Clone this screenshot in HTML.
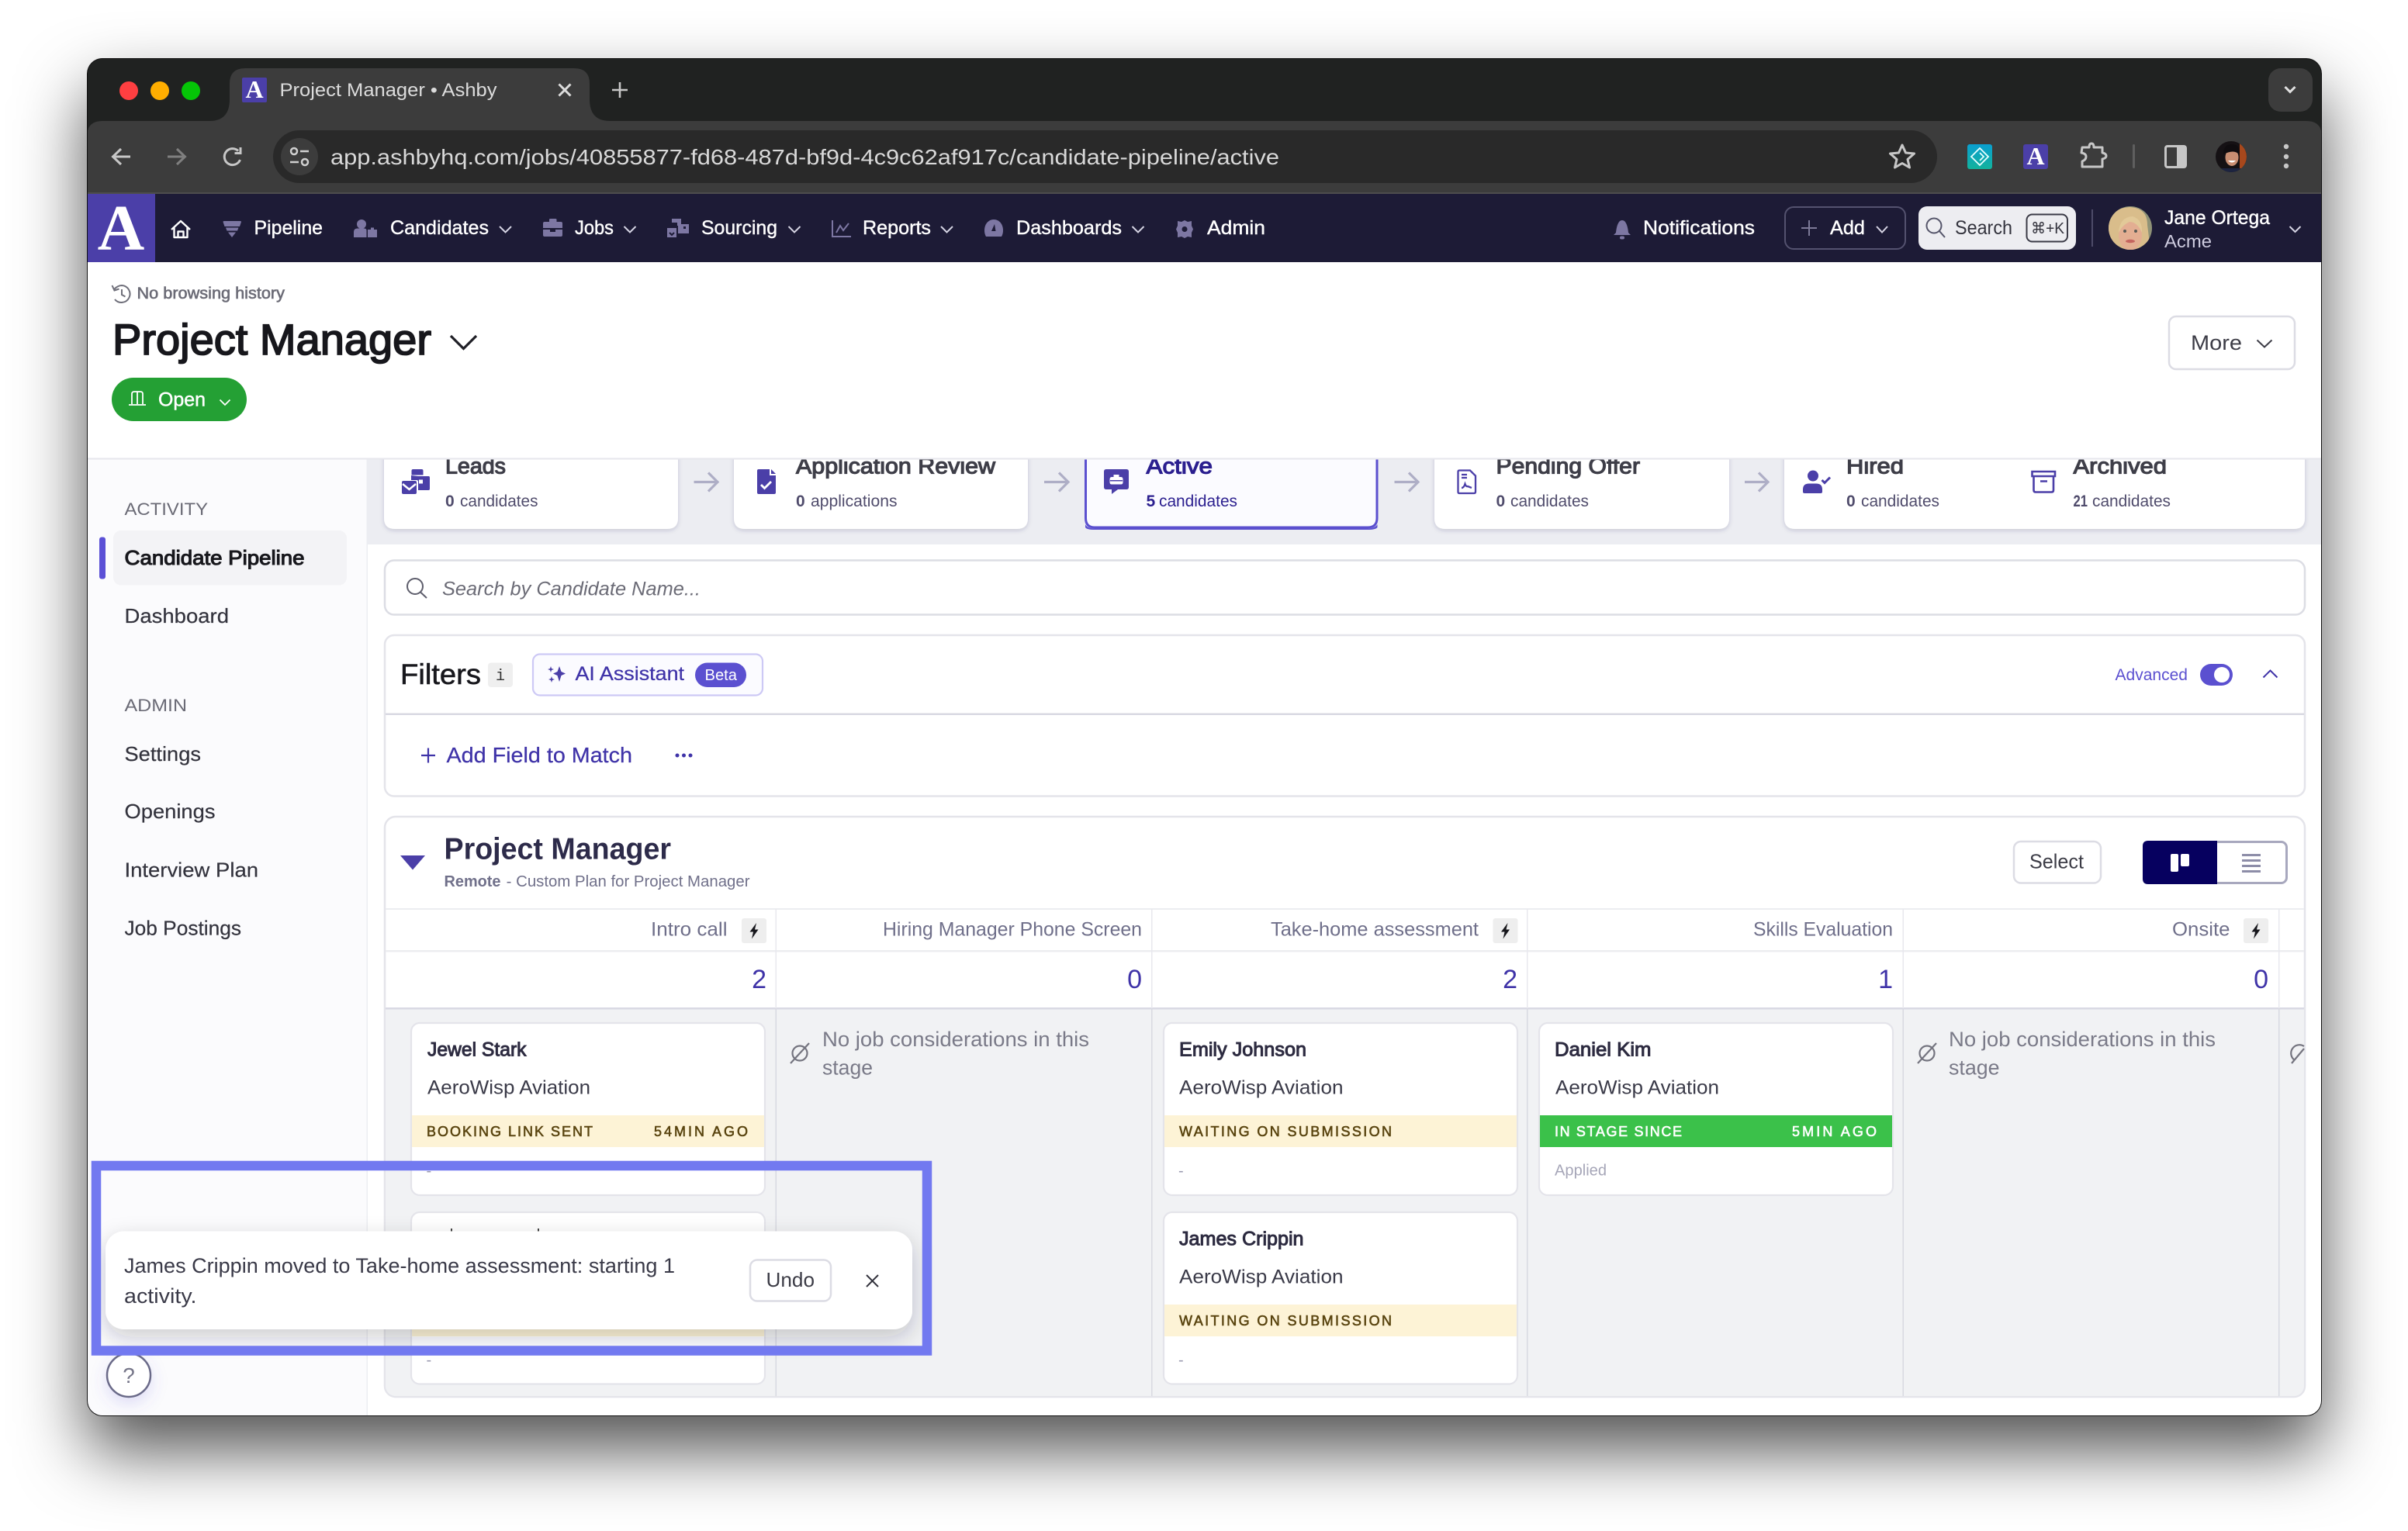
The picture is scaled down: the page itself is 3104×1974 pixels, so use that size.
<!DOCTYPE html>
<html lang="en"><head><meta charset="utf-8"><title>Project Manager • Ashby</title>
<style>
html,body{margin:0;padding:0;background:#fff;width:3104px;height:1974px;overflow:hidden}
#win{position:absolute;left:112px;top:75px;width:2881px;height:1751px;border-radius:20px;box-shadow:0 44px 88px rgba(0,0,0,.68)}
svg{position:absolute;left:0;top:0}
text{font-family:"Liberation Sans","DejaVu Sans",sans-serif;white-space:pre}
.s{font-family:"Liberation Serif",serif}
</style></head><body>
<div id="win"></div>
<svg width="3104" height="1974" viewBox="0 0 3104 1974" xmlns="http://www.w3.org/2000/svg">
<defs>
<clipPath id="w"><rect x="113" y="76" width="2879" height="1749" rx="19"/></clipPath>
<filter id="cs" x="-10%" y="-10%" width="120%" height="125%"><feDropShadow dx="0" dy="2" stdDeviation="3" flood-color="#2a2a50" flood-opacity=".18"/></filter>
<filter id="ts" x="-10%" y="-20%" width="120%" height="150%"><feDropShadow dx="0" dy="10" stdDeviation="14" flood-color="#1a1a30" flood-opacity=".22"/></filter>
<filter id="hs" x="-60%" y="-60%" width="220%" height="260%"><feDropShadow dx="0" dy="8" stdDeviation="10" flood-color="#5b50d6" flood-opacity=".18"/></filter>
<linearGradient id="ext" x1="0" y1="0" x2="0" y2="1"><stop offset="0" stop-color="#0a9fd0"/><stop offset="1" stop-color="#12b29c"/></linearGradient>
<clipPath id="av1"><circle cx="2746" cy="294" r="28"/></clipPath>
<clipPath id="av2"><circle cx="2876" cy="202" r="20"/></clipPath>
<clipPath id="grey"><rect x="497" y="1054" width="2473" height="746" rx="13"/></clipPath>
</defs>

<rect x="112" y="75" width="2881" height="1751" rx="20" fill="#111"/>
<g clip-path="url(#w)">
<!-- tab strip -->
<rect x="112" y="76" width="2881" height="90" fill="#202221"/>
<path d="M270 156 Q296 156 296 128 V108 Q296 88 316 88 H740 Q760 88 760 108 V128 Q760 156 786 156 Z" fill="#3c3c3c"/>
<circle cx="166" cy="117" r="12" fill="#fe3f41"/><circle cx="206" cy="117" r="12" fill="#ffae00"/><circle cx="246" cy="117" r="12" fill="#05c507"/>
<rect x="312" y="100" width="32" height="32" rx="2" fill="#4b3fa8"/>
<text class="s" x="328" y="126" font-size="32" font-weight="700" fill="#fff" text-anchor="middle">A</text>
<text x="360.500" y="124" font-size="24" fill="#dcdcdc" textLength="280" lengthAdjust="spacingAndGlyphs">Project Manager • Ashby</text>
<path d="M720.500 108.500 L735.500 123.500 M735.500 108.500 L720.500 123.500" stroke="#dcdcdc" stroke-width="3" fill="none"/>
<path d="M799 106 V126 M789 116 H809" stroke="#c8c8c8" stroke-width="2.600" fill="none"/>
<rect x="2924" y="88" width="57" height="56" rx="16" fill="#3c3c3c"/>
<path d="M2945.500 112 L2952 118.500 L2958.500 112" stroke="#e0e0e0" stroke-width="3" fill="none"/>
<!-- toolbar -->
<path d="M112 250 V176 Q112 156 132 156 H2973 Q2993 156 2993 176 V250 Z" fill="#3c3c3c"/>
<rect x="112" y="248" width="2881" height="2" fill="#4d4d4d"/>
<path d="M168 202 H146 M156 192 L145.500 202 L156 212" stroke="#c7c7c7" stroke-width="3" fill="none"/>
<path d="M216 202 H238 M228 192 L238.500 202 L228 212" stroke="#7f7f7f" stroke-width="3" fill="none"/>
<path d="M309.500 206 A10.500 10.500 0 1 1 307 194.500 M310 190 V197.500 H302.500" stroke="#c7c7c7" stroke-width="3" fill="none"/>
<rect x="352" y="168" width="2145" height="68" rx="34" fill="#292929"/>
<circle cx="386" cy="202" r="24" fill="#3c3c3c"/>
<circle cx="379" cy="195" r="4" stroke="#d0d0d0" stroke-width="2.500" fill="none"/><path d="M387 195 H398 M374 209 H385" stroke="#d0d0d0" stroke-width="2.500"/><circle cx="393" cy="209" r="4" stroke="#d0d0d0" stroke-width="2.500" fill="none"/>
<text x="426" y="212" font-size="28" fill="#d9d9d9" textLength="1223" lengthAdjust="spacingAndGlyphs">app.ashbyhq.com/jobs/40855877-fd68-487d-bf9d-4c9c62af917c/candidate-pipeline/active</text>
<path d="M2452 187 L2456.500 197 L2467.500 198 L2459 205.500 L2461.500 216 L2452 210.500 L2442.500 216 L2445 205.500 L2436.500 198 L2447.500 197 Z" fill="none" stroke="#c7c7c7" stroke-width="3" stroke-linejoin="round"/>
<rect x="2536" y="186" width="32" height="32" rx="3" fill="url(#ext)"/>
<path d="M2552 191 L2563 202 L2552 213 L2541 202 Z M2552 197 L2557 202 L2552 207" fill="none" stroke="#e8ffff" stroke-width="1.800"/>
<rect x="2608" y="186" width="32" height="32" rx="3" fill="#4b3fa8"/>
<text class="s" x="2624" y="212" font-size="32" font-weight="700" fill="#fff" text-anchor="middle">A</text>
<path d="M2684 190 H2693 Q2693 185 2696 185 Q2699 185 2699 190 H2710 V197 Q2715 198 2715 201 Q2715 204 2710 205 V215 H2684 V208 Q2689 206 2689 202 Q2689 198 2683 197 Z" fill="none" stroke="#c7c7c7" stroke-width="3" stroke-linejoin="round"/>
<rect x="2749" y="186" width="3" height="31" rx="1.500" fill="#5f5f5f"/>
<rect x="2791.500" y="188.500" width="26" height="27" rx="2.500" fill="none" stroke="#c7c7c7" stroke-width="3"/><rect x="2806" y="188" width="12" height="28" fill="#c7c7c7"/>
<g clip-path="url(#av2)"><rect x="2856" y="182" width="40" height="40" fill="#151114"/><rect x="2887" y="182" width="9" height="40" fill="#a8481c"/><ellipse cx="2877" cy="203" rx="8.500" ry="11" fill="#c98e72"/><path d="M2866 199 Q2866 186 2877 186 Q2888 186 2886 199 Q2880 192 2866 199 Z" fill="#0f0c0f"/><path d="M2872 207 Q2877 212 2882 207 Z" fill="#fff"/><rect x="2856" y="217" width="40" height="5" fill="#1d2440"/></g>
<circle cx="2947" cy="189" r="3.200" fill="#c7c7c7"/><circle cx="2947" cy="202" r="3.200" fill="#c7c7c7"/><circle cx="2947" cy="214" r="3.200" fill="#c7c7c7"/>

<!-- app nav -->
<rect x="112" y="250" width="2881" height="88" fill="#1d1b36"/>
<rect x="112" y="250" width="88" height="88" fill="#4b3fa8"/>
<text class="s" x="156" y="322" font-size="84" font-weight="700" fill="#fff" text-anchor="middle">A</text>
<path d="M221 296 L233 285 L245 296 M224.500 293.500 V306 H241.500 V293.500 M229.500 306 V298.500 H236.500 V306" fill="none" stroke="#fff" stroke-width="2.400" stroke-linejoin="round"/>
<g fill="#7d77a3">
<path d="M287.500 286 Q287.500 285 289 285 H309.500 Q311 285 311 286 L309 292 H289.500 Z"/><path d="M291 293.500 H307.500 L306 297.500 H292.500 Z"/><path d="M294 299.500 H304 L299 306 Z"/>
<circle cx="466" cy="289" r="6"/><path d="M456 306 V299 Q456 294.500 461 294.500 H470 Q472.500 295 472.500 297 V306 Z"/><path d="M474 296 H478 V293.500 H482 V296 H486 V306 H474 Z"/>
<path d="M708 286 V283 Q708 282 709.500 282 H716 Q717.500 282 717.500 283 V286 H723 Q725 286 725 288 V294 H700 V288 Q700 286 702 286 Z M700 296 H709 V299 H716 V296 H725 V303 Q725 305 723 305 H702 Q700 305 700 303 Z"/>
<path d="M866 282 H878 V291 H873 V287 H866 Z"/><path d="M874 289 H888 V301 H874 Z"/><path d="M860 294 H872 V306 H860 Z"/>
<path d="M1269 297 C1269 288 1275 283 1281 283 C1288 283 1293 289 1293 297 C1293 301 1292 303 1291 305 H1271 C1270 303 1269 301 1269 297 Z"/>
<path d="M1527 284 L1531 286 L1536 285 L1536 291 L1538 295.500 L1536 300 L1536 306 L1531 305 L1527 307 L1523 305 L1518 306 L1518 300 L1516 295.500 L1518 291 L1518 285 L1523 286 Z"/>
<path d="M2088 285 Q2091 283 2094 285 Q2098 289 2099 300 L2102 303 H2080 L2083 300 Q2084 289 2088 285 Z"/><rect x="2088" y="304.500" width="6" height="4" rx="2"/>
</g>
<path d="M1278 298 L1282 289 L1283.500 298" fill="#1d1b36"/>
<circle cx="1527" cy="295.500" r="3.500" fill="#1d1b36"/>
<path d="M863 300 L866 303 L869 300" stroke="#1d1b36" stroke-width="2" fill="none"/><rect x="881" y="292" width="3" height="3" fill="#1d1b36"/>
<path d="M1073 284 V305 H1097" stroke="#7d77a3" stroke-width="2" fill="none"/><path d="M1078 300 L1083 291 L1087 297 L1094 288" stroke="#7d77a3" stroke-width="2" fill="none"/>

<g font-size="25" fill="#fff" stroke="#fff" stroke-width=".4">
<text x="327.500" y="302" textLength="88.500" lengthAdjust="spacingAndGlyphs">Pipeline</text>
<text x="503" y="302" textLength="127" lengthAdjust="spacingAndGlyphs">Candidates</text>
<text x="741" y="302" textLength="50" lengthAdjust="spacingAndGlyphs">Jobs</text>
<text x="904" y="302" textLength="98" lengthAdjust="spacingAndGlyphs">Sourcing</text>
<text x="1112" y="302" textLength="88" lengthAdjust="spacingAndGlyphs">Reports</text>
<text x="1310" y="302" textLength="136" lengthAdjust="spacingAndGlyphs">Dashboards</text>
<text x="1556" y="302" textLength="75" lengthAdjust="spacingAndGlyphs">Admin</text>
<text x="2118" y="302" textLength="144" lengthAdjust="spacingAndGlyphs">Notifications</text>
<text x="2359" y="302" textLength="45" lengthAdjust="spacingAndGlyphs">Add</text>
<text x="2790" y="289" textLength="136" lengthAdjust="spacingAndGlyphs">Jane Ortega</text>
</g>
<text x="2790" y="319" font-size="23" fill="#cfcde0" textLength="61" lengthAdjust="spacingAndGlyphs">Acme</text>
<g fill="none" stroke="#d6d5e4" stroke-width="2">
<path d="M644 292 L651.500 299.500 L659 292"/><path d="M804.500 292 L812 299.500 L819.500 292"/><path d="M1016.500 292 L1024 299.500 L1031.500 292"/><path d="M1213 292 L1220.500 299.500 L1228 292"/><path d="M1459.500 292 L1467 299.500 L1474.500 292"/><path d="M2419 292 L2426 299.500 L2433 292"/><path d="M2951.500 292 L2958.500 299 L2965.500 292"/>
</g>
<rect x="2301" y="267" width="155" height="54" rx="11" fill="none" stroke="#54526f" stroke-width="2"/>
<path d="M2332 284 V304 M2322 294 H2342" stroke="#7d7a98" stroke-width="2"/>
<rect x="2473" y="266" width="203" height="56" rx="11" fill="#ededf1"/>
<circle cx="2493" cy="291" r="9.500" fill="none" stroke="#55556a" stroke-width="2"/><path d="M2500 298 L2507 306" stroke="#55556a" stroke-width="2"/>
<text x="2520" y="302" font-size="25" fill="#33333d" textLength="74" lengthAdjust="spacingAndGlyphs">Search</text>
<rect x="2612.500" y="276.500" width="52.500" height="35" rx="7" fill="none" stroke="#3a3a46" stroke-width="2"/>
<text x="2618" y="301" font-size="20" fill="#33333d" textLength="43" lengthAdjust="spacingAndGlyphs">⌘+K</text>
<rect x="2696" y="270" width="2" height="48" fill="#4d4b68"/>
<g clip-path="url(#av1)"><rect x="2718" y="266" width="56" height="56" fill="#8f9277"/><path d="M2718 322 V290 Q2722 268 2745 267 Q2768 268 2768 290 L2772 322 Z" fill="#d9bd8b"/><ellipse cx="2746" cy="303" rx="15" ry="20" fill="#e3ae92"/><path d="M2731 300 Q2732 280 2749 279 Q2762 283 2761 300 Q2755 286 2745 286 Q2736 290 2731 300 Z" fill="#e2c998"/><ellipse cx="2746" cy="311" rx="6" ry="2.200" fill="#c4645f"/><circle cx="2739" cy="298" r="2" fill="#5a5a55"/><circle cx="2753" cy="298" r="2" fill="#5a5a55"/></g>

<!-- main page backgrounds -->
<rect x="473" y="592" width="2520" height="1234" fill="#fff"/>
<rect x="473" y="592" width="2520" height="110" fill="#ecedf2"/>

<!-- stage cards -->
<g fill="#fff" filter="url(#cs)">
<path d="M495 580 H874 V668 Q874 682 860 682 H509 Q495 682 495 668 Z"/>
<path d="M946 580 H1325 V668 Q1325 682 1311 682 H960 Q946 682 946 668 Z"/>
<path d="M1849 580 H2229 V668 Q2229 682 2215 682 H1863 Q1849 682 1849 668 Z"/>
<path d="M2300 580 H2670 V668 Q2670 682 2656 682 H2314 Q2300 682 2300 668 Z"/>
<path d="M2592 580 H2971 V668 Q2971 682 2957 682 H2606 Q2592 682 2592 668 Z"/>
</g>
<path d="M1399.500 580 V668 Q1399.500 680 1411 680 H1763 Q1775 680 1775 668 V580" fill="#fbfbff" stroke="#5b50cf" stroke-width="3"/>
<path d="M1399 676 Q1401 681 1411 681.500 H1763 Q1773 681 1775.500 676 L1775.500 680 Q1773 683 1763 683 H1411 Q1401 683 1399 680 Z" fill="#5b50cf"/>
<g fill="none" stroke="#aeaec6" stroke-width="3.200">
<path d="M894.500 621.500 H925 M913 609.500 L925 621.500 L913 633.500"/><path d="M1346 621.500 H1377 M1365 609.500 L1377 621.500 L1365 633.500"/><path d="M1797.500 621.500 H1828 M1816 609.500 L1828 621.500 L1816 633.500"/><path d="M2249 621.500 H2279 M2267 609.500 L2279 621.500 L2267 633.500"/>
</g>
<!-- stage icons -->
<g fill="#4b3fa8">
<path d="M532.500 605 H543.500 Q545.500 605 545.500 607 V612.500 H530.500 V607 Q530.500 605 532.500 605 Z"/>
<path d="M539 614 H552.500 Q554 614 554 616 V630 Q554 632 552.500 632 H539 V621 Q539 619 537 619 H530 V613 L539 614 Z"/>
<path d="M518 622 Q518 620 520 620 H535 Q537 620 537 622 V635 Q537 637 535 637 H520 Q518 637 518 635 Z"/>
<path d="M978 605 H992 V613 H1000 V635 Q1000 637 998 637 H978 Q976 637 976 635 V607 Q976 605 978 605 Z"/><path d="M994 605 L1000 611 H994 Z"/>
<path d="M1426 605 H1452 Q1455 605 1455 608 V628 Q1455 631 1452 631 H1441 L1433 637 V631 H1426 Q1423 631 1423 628 V608 Q1423 605 1426 605 Z"/>
<circle cx="2337" cy="613.500" r="7"/><path d="M2324 631 Q2324 623.500 2332 623.500 H2341 Q2349 623.500 2349 631 V634 Q2349 636 2347 636 H2326 Q2324 636 2324 634 Z"/>
</g>
<rect x="540" y="618.500" width="5" height="5" fill="#fff"/>
<path d="M519 624 L527.500 631 L536 624" fill="none" stroke="#fff" stroke-width="2.500"/>
<path d="M981 625 L985.500 629.500 L994 621" fill="none" stroke="#fff" stroke-width="2.800"/>
<path d="M1431 618 Q1431 615.500 1433 615.500 H1445 Q1447 615.500 1447 618 V622 Q1447 624 1445 624 H1433 Q1431 624 1431 622 Z M1436 615 V612.500 H1442 V615" fill="#fff" stroke="#fff" stroke-width="1"/>
<rect x="1431" y="619" width="16" height="1.500" fill="#4b3fa8"/>
<path d="M1881 606.500 H1895 L1902 613.500 V634 Q1902 636 1900 636 H1881 Q1879.500 636 1879.500 634 V608.500 Q1879.500 606.500 1881 606.500 Z M1884 612 H1891 M1884 616 H1891 M1884 629 Q1887 629 1888.500 624 Q1890 628 1892 627 L1897 629" fill="none" stroke="#4b3fa8" stroke-width="2.300"/>
<path d="M2348.500 619 L2352 622.500 L2359 615.500" fill="none" stroke="#4b3fa8" stroke-width="3"/>
<path d="M2619.500 608 H2649 V614 H2619.500 Z M2621.500 615 V632 Q2621.500 634.500 2624 634.500 H2644.500 Q2647 634.500 2647 632 V615 M2630 620.500 H2639" fill="none" stroke="#4b3fa8" stroke-width="2.600"/>

<g font-size="29" stroke-width="1.200">
<text x="574" y="610.500" fill="#3e3e48" stroke="#3e3e48" textLength="78" lengthAdjust="spacingAndGlyphs">Leads</text>
<text x="1026" y="610.500" fill="#3e3e48" stroke="#3e3e48" textLength="257" lengthAdjust="spacingAndGlyphs">Application Review</text>
<text x="1477.500" y="610.500" fill="#2b1f8f" stroke="#2b1f8f" textLength="85.500" lengthAdjust="spacingAndGlyphs">Active</text>
<text x="1928.500" y="610.500" fill="#3e3e48" stroke="#3e3e48" textLength="185.500" lengthAdjust="spacingAndGlyphs">Pending Offer</text>
<text x="2380" y="610.500" fill="#3e3e48" stroke="#3e3e48" textLength="74" lengthAdjust="spacingAndGlyphs">Hired</text>
<text x="2672.500" y="610.500" fill="#3e3e48" stroke="#3e3e48" textLength="120.500" lengthAdjust="spacingAndGlyphs">Archived</text>
</g>
<g font-size="21" fill="#504c6c">
<text x="574" y="653" font-weight="700">0</text><text x="593" y="653" textLength="100.500" lengthAdjust="spacingAndGlyphs">candidates</text>
<text x="1026" y="653" font-weight="700">0</text><text x="1045" y="653" textLength="111.500" lengthAdjust="spacingAndGlyphs">applications</text>
<text x="1477.500" y="653" font-weight="700" fill="#2b1f8f">5</text><text x="1494" y="653" fill="#2b1f8f" textLength="101" lengthAdjust="spacingAndGlyphs">candidates</text>
<text x="1928.500" y="653" font-weight="700">0</text><text x="1947" y="653" textLength="101" lengthAdjust="spacingAndGlyphs">candidates</text>
<text x="2380" y="653" font-weight="700">0</text><text x="2399" y="653" textLength="101" lengthAdjust="spacingAndGlyphs">candidates</text>
<text x="2672.500" y="653" font-weight="700" textLength="18.500" lengthAdjust="spacingAndGlyphs">21</text><text x="2697" y="653" textLength="101" lengthAdjust="spacingAndGlyphs">candidates</text>
</g>

<!-- job header (covers scrolled stages) -->
<rect x="112" y="338" width="2881" height="253" fill="#fff"/>
<rect x="112" y="590.500" width="2881" height="2" fill="#e6e6ec"/>
<path d="M147 373 Q152 368 157 368 A11 11 0 1 1 148 386 M144.500 368 L147.500 374.500 L153.500 372.500 M157 373 V380 L161.500 382.500" fill="none" stroke="#6f6f7a" stroke-width="2"/>
<text x="176.500" y="385" font-size="21" fill="#6b6b76" stroke="#6b6b76" stroke-width=".6" textLength="190.500" lengthAdjust="spacingAndGlyphs">No browsing history</text>
<text x="145" y="457" font-size="56" fill="#17171c" stroke="#17171c" stroke-width="1.800" textLength="411" lengthAdjust="spacingAndGlyphs">Project Manager</text>
<path d="M581 433 L597.500 449.500 L614 433" fill="none" stroke="#1f1f26" stroke-width="3.200"/>
<rect x="144" y="487" width="174" height="56" rx="28" fill="#24a034"/>
<path d="M166 522 H188 M170 521 V508 Q170 505 173 505 H181 Q184 505 184 508 V521 M177 505 V521" stroke="#fff" stroke-width="1.800" fill="none"/>
<text x="204" y="523.500" font-size="25" fill="#fff" stroke="#fff" stroke-width=".5" textLength="61" lengthAdjust="spacingAndGlyphs">Open</text>
<path d="M283.500 515.500 L290 522 L296.500 515.500" fill="none" stroke="#fff" stroke-width="1.800"/>
<rect x="2796" y="408" width="162" height="68" rx="9" fill="#fff" stroke="#dcdce4" stroke-width="2.500"/>
<text x="2824" y="451" font-size="27" fill="#3c3c46" textLength="66" lengthAdjust="spacingAndGlyphs">More</text>
<path d="M2909.500 438.500 L2919 447.500 L2928.500 438.500" fill="none" stroke="#3c3c46" stroke-width="2"/>

<!-- sidebar -->
<rect x="112" y="592.500" width="361" height="1234" fill="#fbfbfd"/>
<rect x="472.500" y="592.500" width="1.500" height="1234" fill="#ecedf2"/>
<text x="160.500" y="664" font-size="22" fill="#6b6b76" textLength="107.500" lengthAdjust="spacingAndGlyphs">ACTIVITY</text>
<rect x="146" y="684" width="301" height="70.500" rx="10" fill="#f3f3f6"/>
<rect x="128" y="692.500" width="8" height="54" rx="3" fill="#5b50d6"/>
<text x="160.500" y="728" font-size="26" fill="#17171c" stroke="#17171c" stroke-width="1.100" textLength="232" lengthAdjust="spacingAndGlyphs">Candidate Pipeline</text>
<g font-size="26" fill="#33333d" stroke="#33333d" stroke-width=".2">
<text x="160.500" y="803" textLength="134.500" lengthAdjust="spacingAndGlyphs">Dashboard</text>
<text x="160.500" y="981" textLength="98.500" lengthAdjust="spacingAndGlyphs">Settings</text>
<text x="160.500" y="1055" textLength="117" lengthAdjust="spacingAndGlyphs">Openings</text>
<text x="160.500" y="1130.500" textLength="172.500" lengthAdjust="spacingAndGlyphs">Interview Plan</text>
<text x="160.500" y="1205.500" textLength="150.500" lengthAdjust="spacingAndGlyphs">Job Postings</text>
</g>
<text x="160.500" y="917" font-size="22" fill="#6b6b76" textLength="80.500" lengthAdjust="spacingAndGlyphs">ADMIN</text>

<!-- search box -->
<rect x="496" y="722.500" width="2475" height="70" rx="12" fill="#fff" stroke="#dcdde4" stroke-width="2.500"/>
<circle cx="535" cy="756" r="10" fill="none" stroke="#5e5e6c" stroke-width="2"/><path d="M542 763.500 L550 771" stroke="#5e5e6c" stroke-width="2"/>
<text x="570" y="767.500" font-size="25" font-style="italic" fill="#6b6b76" textLength="333" lengthAdjust="spacingAndGlyphs">Search by Candidate Name...</text>

<!-- filters box -->
<rect x="496" y="819" width="2475" height="207.500" rx="12" fill="#fff" stroke="#e4e4ea" stroke-width="2.500"/>
<rect x="497" y="919.500" width="2473" height="2.500" fill="#d8d8e2"/>
<text x="516" y="882" font-size="37" fill="#17171c" stroke="#17171c" stroke-width=".6" textLength="104" lengthAdjust="spacingAndGlyphs">Filters</text>
<rect x="629" y="854.500" width="32" height="31.500" rx="4" fill="#efefef"/>
<text x="645" y="877" font-size="20" fill="#333" text-anchor="middle" style="font-family:'Liberation Mono',monospace">i</text>
<rect x="687" y="843.500" width="296" height="53" rx="9" fill="#fbfbff" stroke="#cdc9f5" stroke-width="2.200"/>
<path d="M721 859 L723.500 866 L729 868.500 L723.500 871 L721 879 L718.500 871 L713 868.500 L718.500 866 Z M710 859 L711 862 L714 863 L711 864 L710 867 L709 864 L706 863 L709 862 Z M711 872 L712 875 L715 876 L712 877 L711 880 L710 877 L707 876 L710 875 Z" fill="#4b3fa8"/>
<text x="741.500" y="877" font-size="25" fill="#3f33a8" stroke="#3f33a8" stroke-width=".25" textLength="140.500" lengthAdjust="spacingAndGlyphs">AI Assistant</text>
<rect x="896" y="854.500" width="66" height="31.500" rx="15.700" fill="#5b50d0"/>
<text x="908.500" y="877" font-size="20" fill="#fff" textLength="41.500" lengthAdjust="spacingAndGlyphs">Beta</text>
<path d="M552 964.500 V983.500 M543 974 H561" stroke="#3f33a8" stroke-width="2.200"/>
<text x="575.500" y="983" font-size="28" fill="#3f33a8" stroke="#3f33a8" stroke-width=".25" textLength="239.500" lengthAdjust="spacingAndGlyphs">Add Field to Match</text>
<circle cx="873" cy="974" r="2.500" fill="#3f33a8"/><circle cx="881.500" cy="974" r="2.500" fill="#3f33a8"/><circle cx="890" cy="974" r="2.500" fill="#3f33a8"/>
<text x="2726.500" y="877" font-size="21" fill="#5b50d0" textLength="93.500" lengthAdjust="spacingAndGlyphs">Advanced</text>
<rect x="2836" y="856" width="42" height="28" rx="14" fill="#5b50d0"/><circle cx="2864" cy="870" r="10" fill="#fff"/>
<path d="M2917.500 873.500 L2926.500 864.500 L2935.500 873.500" fill="none" stroke="#3f33a8" stroke-width="2"/>

<!-- pipeline box -->
<rect x="496" y="1053" width="2475" height="748" rx="14" fill="#fff" stroke="#e4e4ea" stroke-width="2.500"/>
<g clip-path="url(#grey)">
<rect x="497" y="1300" width="2473" height="500" fill="#f1f2f4"/>
<rect x="497" y="1171" width="2473" height="2" fill="#ecedf0"/>
<rect x="497" y="1225" width="2473" height="2.500" fill="#ecedf0"/>
<rect x="497" y="1299" width="2473" height="2.500" fill="#d9d9e3"/>
<g fill="#e8e8ee"><rect x="999.500" y="1172" width="1.500" height="128"/><rect x="1484" y="1172" width="1.500" height="128"/><rect x="1968" y="1172" width="1.500" height="128"/><rect x="2452.500" y="1172" width="1.500" height="128"/><rect x="2937" y="1172" width="1.500" height="128"/></g>
<g fill="#d8d9e1"><rect x="999.500" y="1300" width="1.500" height="500"/><rect x="1484" y="1300" width="1.500" height="500"/><rect x="1968" y="1300" width="1.500" height="500"/><rect x="2452.500" y="1300" width="1.500" height="500"/><rect x="2937" y="1300" width="1.500" height="500"/></g>
</g>
<path d="M516 1103 H548 L532 1121.500 Z" fill="#4b3fa8"/>
<text x="572.500" y="1107.500" font-size="39" font-weight="700" fill="#2d2b4a" textLength="292.500" lengthAdjust="spacingAndGlyphs">Project Manager</text>
<text x="572.500" y="1143" font-size="20" font-weight="700" fill="#70708a" textLength="73" lengthAdjust="spacingAndGlyphs">Remote</text>
<text x="647" y="1143" font-size="20" fill="#70708a" textLength="319.500" lengthAdjust="spacingAndGlyphs"> - Custom Plan for Project Manager</text>
<rect x="2596" y="1085" width="112" height="53.500" rx="9" fill="#fff" stroke="#dcdce4" stroke-width="2.500"/>
<text x="2616" y="1119.500" font-size="26" fill="#3c3c46" textLength="70" lengthAdjust="spacingAndGlyphs">Select</text>
<rect x="2763.500" y="1085.500" width="184" height="53" rx="7" fill="#fff" stroke="#a8a8be" stroke-width="3"/>
<path d="M2769 1084 H2858 V1140 H2769 Q2762 1140 2762 1133 V1091 Q2762 1084 2769 1084 Z" fill="#06005f"/>
<rect x="2798" y="1101" width="10" height="23" rx="2" fill="#fff"/><rect x="2811" y="1101" width="11" height="16" rx="2" fill="#fff"/>
<g fill="#8d8da8"><rect x="2890" y="1101" width="24" height="3"/><rect x="2890" y="1108" width="24" height="3"/><rect x="2890" y="1115" width="24" height="3"/><rect x="2890" y="1122" width="24" height="3"/></g>

<g font-size="25" fill="#6f6f8a">
<text x="839" y="1206.500" textLength="98.500" lengthAdjust="spacingAndGlyphs">Intro call</text>
<text x="1138" y="1206.500" textLength="334" lengthAdjust="spacingAndGlyphs">Hiring Manager Phone Screen</text>
<text x="1638" y="1206.500" textLength="268" lengthAdjust="spacingAndGlyphs">Take-home assessment</text>
<text x="2260" y="1206.500" textLength="180" lengthAdjust="spacingAndGlyphs">Skills Evaluation</text>
<text x="2800" y="1206.500" textLength="74.500" lengthAdjust="spacingAndGlyphs">Onsite</text>
</g>
<g fill="#eeeeee"><rect x="956" y="1184" width="32" height="32" rx="3"/><rect x="1924.500" y="1184" width="32" height="32" rx="3"/><rect x="2892" y="1184" width="32" height="32" rx="3"/></g>
<g fill="#17171c"><path d="M975 1190 L966.500 1201.500 H971 L969 1210.500 L977.500 1198.500 H973 Z"/><path d="M1943.500 1190 L1935 1201.500 H1939.500 L1937.500 1210.500 L1946 1198.500 H1941.500 Z"/><path d="M2911 1190 L2902.500 1201.500 H2907 L2905 1210.500 L2913.500 1198.500 H2909 Z"/></g>
<g font-size="34" fill="#3f33a8" text-anchor="end">
<text x="988" y="1274">2</text><text x="1472" y="1274">0</text><text x="1956" y="1274">2</text><text x="2440" y="1274">1</text><text x="2924" y="1274">0</text>
</g>

<!-- candidate cards -->
<g fill="#fff" stroke="#e4e4ea" stroke-width="2.200">
<rect x="530" y="1319" width="456" height="222" rx="11"/><rect x="530" y="1563" width="456" height="221.500" rx="11"/>
<rect x="1500" y="1319" width="456" height="222" rx="11"/><rect x="1500" y="1563" width="456" height="221.500" rx="11"/>
<rect x="1984" y="1319" width="456" height="222" rx="11"/>
</g>
<g fill="#fdf3d6"><rect x="531" y="1438" width="454" height="41"/><rect x="531" y="1682" width="454" height="41"/><rect x="1501" y="1438" width="454" height="41"/><rect x="1501" y="1682" width="454" height="41"/></g>
<rect x="1985" y="1438" width="454" height="41" fill="#3bc14a"/>
<rect x="581" y="1584" width="2" height="4" fill="#444"/><rect x="693" y="1584" width="2" height="4" fill="#444"/>
<g font-size="25" fill="#2d2b40" stroke="#2d2b40" stroke-width="1">
<text x="551" y="1361.500" textLength="127.500" lengthAdjust="spacingAndGlyphs">Jewel Stark</text>
<text x="1520" y="1361.500" textLength="164" lengthAdjust="spacingAndGlyphs">Emily Johnson</text>
<text x="2004" y="1361.500" textLength="124.500" lengthAdjust="spacingAndGlyphs">Daniel Kim</text>
<text x="1520" y="1605.500" textLength="160.500" lengthAdjust="spacingAndGlyphs">James Crippin</text>
</g>
<g font-size="25" fill="#3a3a48">
<text x="551" y="1410.500" textLength="210" lengthAdjust="spacingAndGlyphs">AeroWisp Aviation</text>
<text x="1520" y="1410.500" textLength="211.500" lengthAdjust="spacingAndGlyphs">AeroWisp Aviation</text>
<text x="2005" y="1410.500" textLength="211" lengthAdjust="spacingAndGlyphs">AeroWisp Aviation</text>
<text x="1520" y="1654.500" textLength="211.500" lengthAdjust="spacingAndGlyphs">AeroWisp Aviation</text>
</g>
<g font-size="18" fill="#5a4510" stroke="#5a4510" stroke-width=".6">
<text x="550" y="1465" textLength="214" lengthAdjust="spacing">BOOKING LINK SENT</text>
<text x="843" y="1465" textLength="121" lengthAdjust="spacing">54MIN AGO</text>
<text x="1520" y="1465" textLength="274" lengthAdjust="spacing">WAITING ON SUBMISSION</text>
<text x="1520" y="1709" textLength="274" lengthAdjust="spacing">WAITING ON SUBMISSION</text>
<text x="2004" y="1465" fill="#fff" stroke="#fff" textLength="164" lengthAdjust="spacing">IN STAGE SINCE</text>
<text x="2310" y="1465" fill="#fff" stroke="#fff" textLength="109" lengthAdjust="spacing">5MIN AGO</text>
</g>
<text x="2004" y="1515.500" font-size="20" fill="#a6a6b8" textLength="67" lengthAdjust="spacingAndGlyphs">Applied</text>
<g font-size="20" fill="#9a9ab0"><text x="549.500" y="1516">-</text><text x="1519" y="1516">-</text><text x="549.500" y="1760">-</text><text x="1519" y="1760">-</text></g>
<!-- empty stages -->
<g fill="#7a7a88" font-size="27">
<text x="1060" y="1349" textLength="344" lengthAdjust="spacingAndGlyphs">No job considerations in this</text><text x="1060" y="1385.500" textLength="65" lengthAdjust="spacingAndGlyphs">stage</text>
<text x="2512" y="1349" textLength="344" lengthAdjust="spacingAndGlyphs">No job considerations in this</text><text x="2512" y="1385.500" textLength="65.500" lengthAdjust="spacingAndGlyphs">stage</text>
</g>
<g fill="none" stroke="#74747f" stroke-width="2.200">
<circle cx="1031" cy="1358" r="9.500"/><path d="M1019 1371 L1043 1345"/>
<circle cx="2484" cy="1358" r="9.500"/><path d="M2472 1371 L2496 1345"/>
<path d="M2970 1349 A9.500 9.500 0 0 0 2958 1367 M2954 1371 L2970 1352"/>
</g>

<!-- help -->
<circle cx="166" cy="1773" r="28" fill="#fff" stroke="#6b6a88" stroke-width="2.500" filter="url(#hs)"/>
<text x="166" y="1783" font-size="28" fill="#77778a" text-anchor="middle">?</text>

<!-- toast -->
<rect x="136" y="1587.500" width="1040" height="126.500" rx="24" fill="#fff" filter="url(#ts)"/>
<text x="160" y="1641" font-size="27" fill="#3a3a48" textLength="710" lengthAdjust="spacingAndGlyphs">James Crippin moved to Take-home assessment: starting 1</text>
<text x="160" y="1680" font-size="27" fill="#3a3a48" textLength="93.500" lengthAdjust="spacingAndGlyphs">activity.</text>
<rect x="967" y="1624.500" width="104" height="53" rx="9" fill="#fff" stroke="#dcdce4" stroke-width="2.500"/>
<text x="987.500" y="1659" font-size="26" fill="#3c3c46" textLength="62.500" lengthAdjust="spacingAndGlyphs">Undo</text>
<path d="M1117 1644 L1132 1659 M1132 1644 L1117 1659" stroke="#33333d" stroke-width="2"/>
<!-- highlight -->
<rect x="124" y="1503" width="1071" height="238.500" fill="none" stroke="#7279f0" stroke-width="12.500"/>
</g>
</svg>
</body></html>
